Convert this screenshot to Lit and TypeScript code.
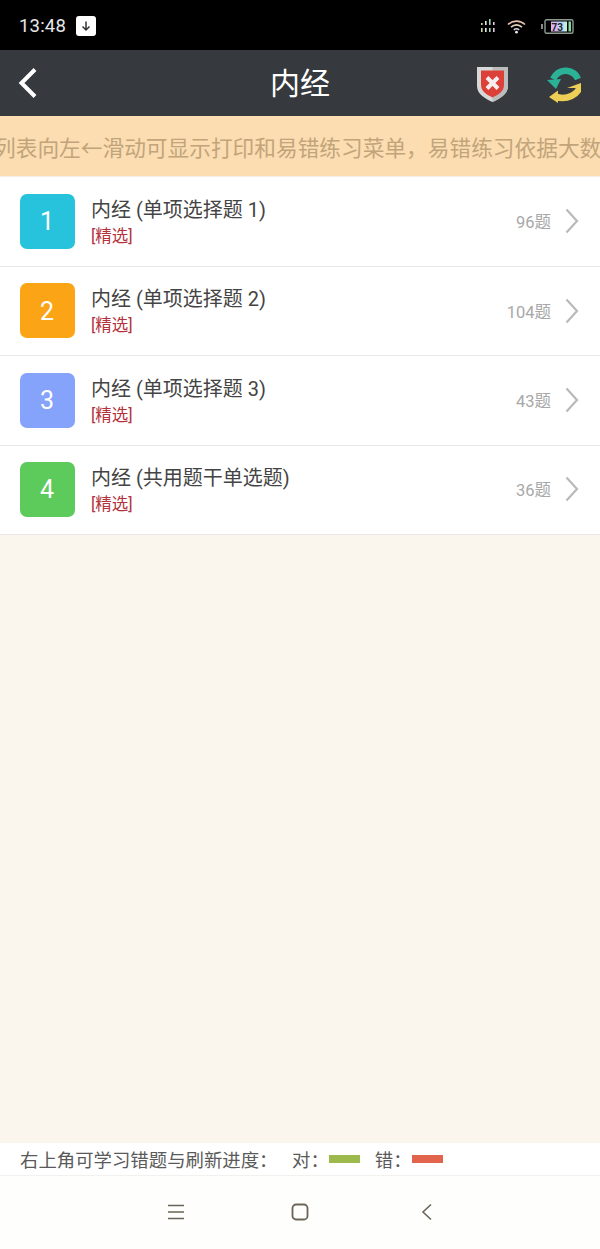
import { LitElement, html, css, svg } from 'lit';
import { customElement } from 'lit/decorators.js';

const rows = [
  { n: 1, color: '#27c3dc', title: '内经 (单项选择题 1)', count: '96题' },
  { n: 2, color: '#fba516', title: '内经 (单项选择题 2)', count: '104题' },
  { n: 3, color: '#86a3fb', title: '内经 (单项选择题 3)', count: '43题' },
  { n: 4, color: '#5ccb5b', title: '内经 (共用题干单选题)', count: '36题' },
];

// x, top of the upper dash, colour
const signalBars = [
  [0, 4, '#c9d89a'], [4, 2, '#e8e8e8'], [8, 0, '#9fd8b8'], [12, 3, '#e6c6e6'],
] as const;

@customElement('app-root')
export class AppRoot extends LitElement {
  static styles = css`
    :host {
      display: flex;
      flex-direction: column;
      height: 1249px;
      background: #faf5ed;
      font-family: Roboto, 'Noto Sans CJK SC', sans-serif;
      overflow: hidden;
    }
    svg { display: block; flex: none; }

    .status {
      height: 50px;
      flex: none;
      background: #000;
      display: flex;
      align-items: center;
      padding: 2px 26px 0 19px;
      box-sizing: border-box;
      color: #e8e8e8;
    }
    .time { font-size: 18.5px; font-weight: 400; letter-spacing: 0.2px; }
    .dl {
      width: 20px;
      height: 20px;
      margin-left: 10px;
      border-radius: 3px;
      background: #fff;
      display: flex;
      align-items: center;
      justify-content: center;
    }
    .status-right { margin-left: auto; display: flex; align-items: center; }
    .wifi { margin-left: 10px; }
    .battery { margin-left: 15px; }

    .nav {
      height: 66px;
      flex: none;
      background: #36393d;
      display: grid;
      grid-template-columns: 1fr auto 1fr;
      align-items: center;
      color: #fff;
    }
    .back { margin-left: 18px; }
    .nav h1 { margin: 0; padding-top: 2px; font-size: 30px; font-weight: 400; line-height: 1; }
    .actions {
      display: flex;
      align-items: center;
      justify-content: flex-end;
      padding: 3px 19px 0 0;
      gap: 39px;
    }

    .banner {
      height: 61.4px;
      flex: none;
      background: #fbddb1;
      border-bottom: 1px solid #f5eee4;
      box-sizing: border-box;
      display: flex;
      align-items: center;
      overflow: hidden;
      white-space: nowrap;
      color: #c2a47b;
      font-size: 21.7px;
    }
    .banner span { margin-left: -6px; }

    .list { background: #fff; flex: none; }
    .row {
      height: 89.4px;
      box-sizing: border-box;
      display: flex;
      align-items: center;
      padding: 0 21px 0.6px 20px;
      border-bottom: 1px solid #e9e8e6;
    }
    .badge {
      width: 55px;
      height: 55px;
      box-sizing: border-box;
      padding: 1px 1px 0 0;
      border-radius: 7px;
      color: #fff;
      font-size: 25px;
      display: flex;
      align-items: center;
      justify-content: center;
      flex: none;
    }
    .text { margin-left: 16px; display: flex; flex-direction: column; padding-top: 1px; }
    .title { font-size: 20px; line-height: 26px; color: #444; }
    .tag { font-size: 16.5px; line-height: 20px; color: #b3323c; margin-top: 4px; }
    .count { margin-left: auto; font-size: 16.5px; color: #a8a8a8; margin-right: 14px; }

    .spacer { flex: 1; }

    .legend {
      height: 33px;
      flex: none;
      background: #fff;
      border-bottom: 1px solid #f3f1ee;
      box-sizing: border-box;
      display: flex;
      align-items: center;
      padding-left: 20px;
      font-size: 18.4px;
      color: #5a5a5a;
    }
    .legend .ok { margin-left: 14.5px; }
    .legend .bad { margin-left: 15px; }
    .swatch { width: 31px; height: 8px; }

    .sysbar {
      height: 73px;
      flex: none;
      background: #fefefd;
      position: relative;
    }
    .sysbar svg { position: absolute; top: 27px; }
  `;

  private chevron() {
    return html`<svg width="14" height="26" viewBox="0 0 14 26" fill="none" stroke="#b9b9b9" stroke-width="2.2">
      <path d="M1.5 1.5 12 13 1.5 24.5" />
    </svg>`;
  }

  private signal() {
    return html`<svg width="16" height="14" viewBox="0 0 16 14">
      ${signalBars.map(([x, y, c]) => svg`
        <rect x=${x} y=${y} width="1.6" height=${6 - y} fill=${c} />
        <rect x=${x} y="9" width="1.6" height="4" fill=${c} />
      `)}
    </svg>`;
  }

  render() {
    return html`
      <div class="status">
        <span class="time">13:48</span>
        <span class="dl">
          <svg width="12" height="12" viewBox="0 0 12 12" fill="none" stroke="#333" stroke-width="1.5">
            <path d="M6 1.5v8.5M2.5 6.5 6 10l3.5-3.5" />
          </svg>
        </span>
        <div class="status-right">
          ${this.signal()}
          <svg class="wifi" width="19" height="15" viewBox="0 0 19 15" fill="none" stroke-width="1.6">
            <path d="M1 5.5C6 1 13 1 18 5.5" stroke="#e6c2b4" />
            <path d="M4 8.2C7.5 5.2 11.5 5.2 15 8.2" stroke="#e8d5c0" />
            <path d="M6.8 10.8c1.7-1.3 3.7-1.3 5.4 0" stroke="#d8cbe4" />
            <circle cx="9.5" cy="13.2" r="1.4" fill="#e8e4f0" stroke="none" />
          </svg>
          <svg class="battery" width="33" height="15" viewBox="0 0 33 15">
            <rect x="0" y="5" width="2" height="5" fill="#8a8a8a" />
            <rect x="4" y="0.8" width="28" height="13.4" rx="1.5" fill="none" stroke="#8d9a90" stroke-width="1.4" />
            <rect x="10" y="2.5" width="7" height="10" fill="#d9b8f0" />
            <rect x="17" y="2.5" width="6" height="10" fill="#b9d8f5" />
            <rect x="23" y="2.5" width="3" height="10" fill="#c6eddc" />
            <rect x="27.5" y="2.5" width="2.5" height="10" fill="#86d8a2" />
            <text x="10.5" y="11.5" font-size="10" font-weight="700" fill="#23222e" font-family="Roboto">73</text>
          </svg>
        </div>
      </div>

      <div class="nav">
        <svg class="back" width="20" height="32" viewBox="0 0 20 32" fill="none" stroke="#fff" stroke-width="4">
          <path d="M17 2.5 3.5 16 17 29.5" />
        </svg>
        <h1>内经</h1>
        <div class="actions">
          <svg width="31" height="35" viewBox="0 0 31 35">
            <path d="M0 0H31V19C31 27 23 31.5 15.5 35 8 31.5 0 27 0 19Z" fill="#d8d8d8" />
            <path d="M15.5 0H31V19C31 27 23 31.5 15.5 35Z" fill="#bcbcbc" />
            <path d="M4 3.5H27V18C27 24.5 21.5 27.5 15.5 30.5 9.5 27.5 4 24.5 4 18Z" fill="#dc4139" />
            <path d="M10 10.5 21 21.5M21 10.5 10 21.5" stroke="#f6eeee" stroke-width="4" />
          </svg>
          <svg width="34" height="36" viewBox="0 0 34 36" fill="none">
            <path d="M31 12C27 3 13 -1 6 12" stroke="#2bb296" stroke-width="6.5" />
            <path d="M0 13 14 12 9 22Z" fill="#2bb296" />
            <path d="M33 19C31 28 20 33 9 30" stroke="#eecf56" stroke-width="6.5" />
            <path d="M11 23.5V36L2 30Z" fill="#eecf56" />
            <path d="M20 21 34 16V21Z" fill="#eecf56" />
          </svg>
        </div>
      </div>

      <div class="banner"><span>列表向左←滑动可显示打印和易错练习菜单，易错练习依据大数</span></div>

      <div class="list">
        ${rows.map(
          (r) => html`
            <div class="row">
              <div class="badge" style="background:${r.color}">${r.n}</div>
              <div class="text">
                <span class="title">${r.title}</span>
                <span class="tag">[精选]</span>
              </div>
              <span class="count">${r.count}</span>
              ${this.chevron()}
            </div>
          `
        )}
      </div>

      <div class="spacer"></div>

      <div class="legend">
        <span>右上角可学习错题与刷新进度：</span>
        <span class="ok">对：</span>
        <span class="swatch" style="background:#9cba4c"></span>
        <span class="bad">错：</span>
        <span class="swatch" style="background:#e2644c"></span>
      </div>

      <div class="sysbar">
        <svg style="left:167px" width="18" height="18" viewBox="0 0 18 18" stroke="#6b6459" stroke-width="1.6">
          <path d="M1 2.5H17M1 9H17M1 15.5H17" />
        </svg>
        <svg style="left:291px" width="18" height="18" viewBox="0 0 18 18" fill="none" stroke="#6b6459" stroke-width="1.8">
          <rect x="1.5" y="1.5" width="15" height="15" rx="3.5" />
        </svg>
        <svg style="left:421px" width="12" height="18" viewBox="0 0 12 18" fill="none" stroke="#6b6459" stroke-width="1.6">
          <path d="M10 1.5 2 9l8 7.5" />
        </svg>
      </div>
    `;
  }
}
